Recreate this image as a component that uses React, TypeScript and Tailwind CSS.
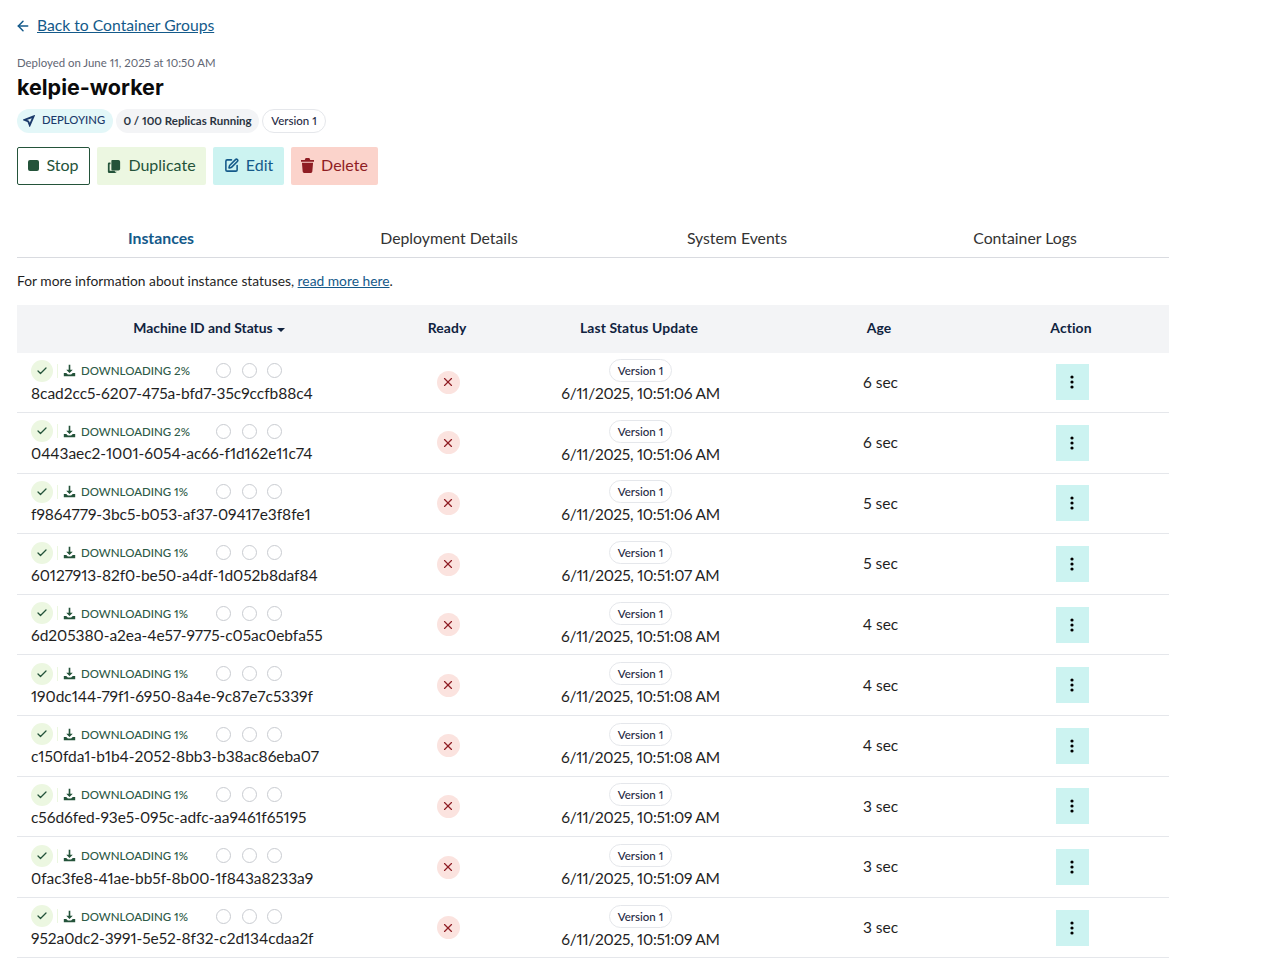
import React from 'react';
import { ArrowLeft, Check, X, SquarePen } from 'lucide-react';

const rows = [
  ['8cad2cc5-6207-475a-bfd7-35c9ccfb88c4', '2%', '10:51:06', '6 sec'],
  ['0443aec2-1001-6054-ac66-f1d162e11c74', '2%', '10:51:06', '6 sec'],
  ['f9864779-3bc5-b053-af37-09417e3f8fe1', '1%', '10:51:06', '5 sec'],
  ['60127913-82f0-be50-a4df-1d052b8daf84', '1%', '10:51:07', '5 sec'],
  ['6d205380-a2ea-4e57-9775-c05ac0ebfa55', '1%', '10:51:08', '4 sec'],
  ['190dc144-79f1-6950-8a4e-9c87e7c5339f', '1%', '10:51:08', '4 sec'],
  ['c150fda1-b1b4-2052-8bb3-b38ac86eba07', '1%', '10:51:08', '4 sec'],
  ['c56d6fed-93e5-095c-adfc-aa9461f65195', '1%', '10:51:09', '3 sec'],
  ['0fac3fe8-41ae-bb5f-8b00-1f843a8233a9', '1%', '10:51:09', '3 sec'],
  ['952a0dc2-3991-5e52-8f32-c2d134cdaa2f', '1%', '10:51:09', '3 sec'],
];

const DownloadIcon = () => (
  <svg viewBox="0 0 16 16" className="w-[13px] h-[13px] text-[#24533a]" fill="currentColor">
    <path d="M7 1h2v6h3L8 11 4 7h3z" />
    <path d="M1 11h3l2 2h4l2-2h3v4H1z" />
  </svg>
);

const DuplicateIcon = () => (
  <svg viewBox="0 0 16 16" className="w-[14px] h-[14px]" fill="currentColor">
    <path d="M6 1h7a2 2 0 0 1 2 2v8a2 2 0 0 1-2 2H6a1 1 0 0 1-1-1V2a1 1 0 0 1 1-1z" />
    <path d="M1 5.500A1.500 1.500 0 0 1 2.500 4H4v2H3v7.500h6V14.500H11V14a2 2 0 0 1-2 2H2.500A1.500 1.500 0 0 1 1 14.500z" />
  </svg>
);

const TrashIcon = () => (
  <svg viewBox="0 0 14 16" className="w-[13px] h-[15px]" fill="currentColor">
    <path d="M5 0h4l1 2h4v2H0V2h4z" />
    <path d="M1 5h12l-.8 9.500A1.600 1.600 0 0 1 10.600 16H3.400a1.600 1.600 0 0 1-1.600-1.500z" />
  </svg>
);

const VersionPill = ({ className = '' }: { className?: string }) => (
  <span className={`inline-flex items-center justify-center border border-[#e5e7eb] rounded-full bg-white text-[11.5px] text-[#1f2a44] font-medium ${className}`}>
    Version 1
  </span>
);

const Row = ({ id, pct, time, age }: { id: string; pct: string; time: string; age: string }) => (
  <div className="grid grid-cols-[384px_92px_292px_188px_196px] h-[60.6px] items-center border-b border-[#e5e7eb] text-[15.5px] text-[#1f1f1f]">
    <div className="pl-3.5">
      <div className="flex items-center h-[22px] -mt-px">
        <span className="w-[22px] h-[22px] rounded-full bg-[#ecf7e1] flex items-center justify-center">
          <Check className="w-3 h-3 text-[#24533a]" strokeWidth={2.5} />
        </span>
        <span className="w-px h-3.5 bg-[#ecf7e1] ml-1" />
        <span className="ml-[5px]"><DownloadIcon /></span>
        <span className="ml-[5px] w-[135px] text-[11.5px] font-medium text-[#2d5a46]">DOWNLOADING {pct}</span>
        <span className="flex gap-[10.5px]">
          <span className="w-[15px] h-[15px] rounded-full border border-[#c9ccd1]" />
          <span className="w-[15px] h-[15px] rounded-full border border-[#c9ccd1]" />
          <span className="w-[15px] h-[15px] rounded-full border border-[#c9ccd1]" />
        </span>
      </div>
      <div className="leading-[22px] tracking-[-0.05px]">{id}</div>
    </div>
    <div className="flex justify-center pl-[2px]">
      <span className="w-[23px] h-[23px] rounded-full bg-[#fbe3df] flex items-center justify-center">
        <X className="w-3.5 h-3.5 text-[#8f1d24]" strokeWidth={2} />
      </span>
    </div>
    <div className="flex flex-col items-center pl-[3px]">
      <VersionPill className="h-[23px] w-[63px] -mt-px" />
      <span className="leading-[22px] tracking-[-0.27px]">6/11/2025, {time} AM</span>
    </div>
    <div className="text-center pl-[3px]">{age}</div>
    <div className="flex justify-center pl-[2px]">
      <button className="w-[33px] h-9 bg-[#ccf3f1] flex items-center justify-center">
        <svg viewBox="0 0 4 14" className="w-1 h-3.5" fill="#000">
          <circle cx="2" cy="2" r="1.600" /><circle cx="2" cy="7" r="1.600" /><circle cx="2" cy="12" r="1.600" />
        </svg>
      </button>
    </div>
  </div>
);

export default function App() {
  return (
    <div className="bg-white font-['Lato',sans-serif] [font-variant-numeric:proportional-nums] px-[17px] w-[1186px] overflow-hidden h-[963px]">
      <div className="pt-[16px] flex items-center h-[36px] text-[#145a8a]">
        <ArrowLeft className="w-4 h-4 -ml-[2px]" strokeWidth={2.25} />
        <a className="ml-[6px] text-[15.7px] underline">Back to Container Groups</a>
      </div>
      <div className="mt-[18px] text-[11.4px] leading-[18px] text-[#5f6673]">Deployed on June 11, 2025 at 10:50 AM</div>
      <h1 className="text-[21.5px] font-['Inter',sans-serif] font-bold leading-[30px] text-[#0b0b0b]">kelpie-worker</h1>
      <div className="flex items-center gap-[3px] mt-[7px]">
        <span className="h-6 w-[96px] rounded-full bg-[#e3f7f8] flex items-center justify-center gap-[7px] pb-px pr-[2px] text-[11.3px] font-medium text-[#1b3a6b]">
          <svg viewBox="0 0 16 16" className="w-3 h-3 text-[#1b3a6b]" fill="none" stroke="currentColor" strokeWidth={2.5}><path d="M14 2 2 6.500l5 2 2 5z" /></svg>
          DEPLOYING
        </span>
        <span className="h-6 w-[143px] rounded-full bg-[#f3f4f6] flex items-center justify-center pb-px text-[11.5px] font-bold text-[#2b3442]">0 / 100 Replicas Running</span>
        <VersionPill className="h-6 w-[64px] pb-px" />
      </div>
      <div className="flex gap-[7px] mt-[14px]">
        <button className="h-[38px] w-[73px] border border-[#24533a] rounded-[2px] flex items-center justify-center gap-[7px] text-[16px] text-[#24533a] pb-[3px]">
          <span className="w-[11px] h-[11px] rounded-[2px] bg-[#24533a] mt-[2px]" />Stop
        </button>
        <button className="h-[38px] w-[109px] bg-[#ecf7e1] rounded-[2px] flex items-center justify-center gap-[7px] text-[16px] text-[#24533a] pb-[3px]">
          <span className="mt-[2px]"><DuplicateIcon /></span>Duplicate
        </button>
        <button className="h-[38px] w-[71px] bg-[#ccf3f1] rounded-[2px] flex items-center justify-center gap-[7px] text-[16px] text-[#145a8a] pb-[3px]">
          <SquarePen className="w-[15px] h-[15px] mt-[2px]" strokeWidth={2.5} />Edit
        </button>
        <button className="h-[38px] w-[87px] bg-[#fbd3cb] rounded-[2px] flex items-center justify-center gap-[7px] text-[16px] text-[#8f1d24] pb-[3px]">
          <span className="mt-[2px]"><TrashIcon /></span>Delete
        </button>
      </div>
      <div className="grid grid-cols-4 mt-[26px] h-[47px] pt-2 border-b border-[#d9dbe0] items-center text-center text-[15.8px] text-[#333]">
        <div className="font-bold text-[#145a8a]">Instances</div>
        <div>Deployment Details</div>
        <div>System Events</div>
        <div>Container Logs</div>
      </div>
      <p className="mt-[13px] text-[13.8px] leading-[20px] text-[#1f1f1f]">
        For more information about instance statuses, <a className="underline text-[#145a8a]">read more here</a>.
      </p>
      <div className="mt-[14px] grid grid-cols-[384px_92px_292px_188px_196px] h-[47.5px] bg-[#f3f4f6] items-center text-center text-[13.9px] font-bold tracking-[0.1px] text-[#10233f]">
        <div className="tracking-normal">Machine ID and Status<span className="inline-block align-middle ml-1 w-0 h-0 border-x-[4.5px] border-x-transparent border-t-[4.5px] border-t-[#10233f]" /></div>
        <div>Ready</div>
        <div>Last Status Update</div>
        <div>Age</div>
        <div>Action</div>
      </div>
      {rows.map((r) => (
        <Row key={r[0]} id={r[0]} pct={r[1]} time={r[2]} age={r[3]} />
      ))}
    </div>
  );
}
